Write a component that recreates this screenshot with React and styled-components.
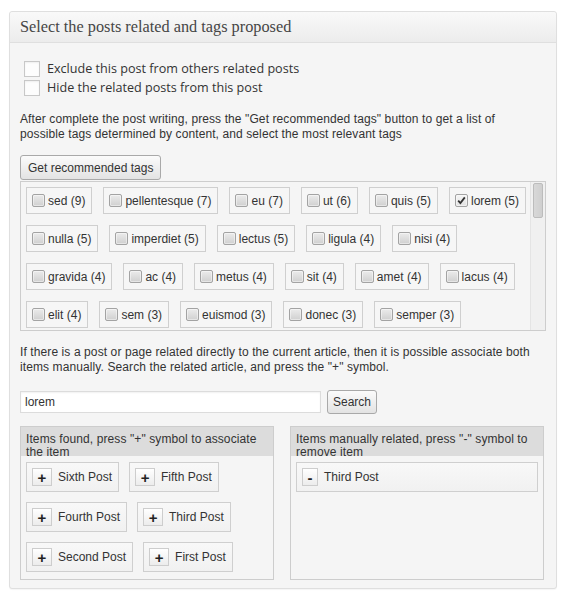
import React from 'react';
import styled, { createGlobalStyle } from 'styled-components';

const GlobalStyle = createGlobalStyle`
  html, body { margin: 0; padding: 0; background: #fff; }
  body { font-family: "Liberation Sans", Arial, sans-serif; font-size: 12px; color: #333; }
  * { box-sizing: border-box; }
`;

const Page = styled.div`
  padding: 11px 10px 8px 9px;
`;

const Postbox = styled.div`
  width: 548px;
  border: 1px solid #dfdfdf;
  border-radius: 3px;
  background: #f5f5f5;
  box-shadow: 0 1px 1px rgba(0, 0, 0, 0.04);
`;

const Header = styled.h3`
  margin: 0;
  height: 31px;
  padding: 0 10px;
  border-bottom: 1px solid #dfdfdf;
  border-radius: 3px 3px 0 0;
  background: linear-gradient(#f9f9f9, #ececec);
  font-family: "Liberation Serif", Georgia, serif;
  font-size: 16.3px;
  font-weight: normal;
  line-height: 30px;
  color: #464646;
`;

const Body = styled.div`
  padding: 0 10px 8px;
`;

const OptionList = styled.ul`
  list-style: none;
  margin: 16px 0 0;
  padding: 0;
`;

const OptionRow = styled.li`
  display: flex;
  align-items: center;
  height: 19px;
  font-family: "Open Sans", "Liberation Sans", sans-serif;
  font-size: 12.6px;
  color: #333;
`;

const OptionBox = styled.span`
  width: 16px;
  height: 16px;
  margin: 0 7px 0 4px;
  border: 1px solid #c8c8c8;
  background: #fdfdfd;
  box-shadow: inset 0 1px 2px rgba(0, 0, 0, 0.06);
`;

const Hint = styled.p`
  max-width: 518px;
  margin: ${(p) => p.$top}px 0 0;
  line-height: 15px;
  font-size: 12px;
  letter-spacing: 0.1px;
  color: #333;
`;

const GrayButton = styled.button`
  display: flex;
  align-items: center;
  height: ${(p) => p.$h}px;
  margin-top: ${(p) => p.$top || 0}px;
  padding: 0 ${(p) => p.$px}px;
  border: 1px solid #a9a9a9;
  border-radius: 3px;
  background: linear-gradient(#fbfbfb, #e3e3e3);
  font-family: "Liberation Sans", Arial, sans-serif;
  font-size: 12px;
  color: #333;
  cursor: pointer;
`;

const TagBox = styled.div`
  display: flex;
  margin-top: 1px;
  height: 150px;
  border: 1px solid #cdcdcd;
`;

const TagViewport = styled.div`
  flex: 1;
  overflow: hidden;
  padding: 5px 0 5px 5px;
`;

const ScrollTrack = styled.div`
  width: 15px;
  padding: 1px 2px 0 2px;
  background: #f0f0f0;
  border-left: 1px solid #e4e4e4;
`;

const ScrollThumb = styled.div`
  height: 35px;
  border: 1px solid #bcbcbc;
  border-radius: 2px;
  background: linear-gradient(90deg, #d8d8d8, #cfcfcf);
`;

const TagList = styled.div`
  display: flex;
  flex-wrap: wrap;
  gap: 11px;
`;

const Tag = styled.label`
  display: flex;
  align-items: center;
  height: 27px;
  padding: 0 6px 0 5px;
  border: 1px solid #cfcfcf;
  background: #f6f6f6;
  font-size: 12px;
  color: #333;
  white-space: nowrap;
`;

const TagCheck = styled.span`
  position: relative;
  width: 13px;
  height: 13px;
  margin-right: 3px;
  border: 1px solid #a3a3a3;
  border-radius: 2px;
  background: ${(p) =>
    p.$checked ? 'linear-gradient(#f6f6f6, #e2e2e2)' : 'linear-gradient(#ebebeb, #d0d0d0)'};
  box-shadow: inset 0 0 0 1px rgba(255, 255, 255, 0.45);

  svg {
    position: absolute;
    left: 1px;
    top: 1px;
  }
`;

const SearchRow = styled.div`
  display: flex;
  align-items: center;
  gap: 6px;
  height: 24px;
  margin-top: 15px;
`;

const SearchInput = styled.input`
  width: 301px;
  height: 22px;
  padding: 0 4px;
  border: 1px solid #dcdcdc;
  background: #fff;
  box-shadow: inset 0 1px 2px rgba(0, 0, 0, 0.06);
  font-family: "Liberation Sans", Arial, sans-serif;
  font-size: 12px;
  color: #333;
  outline: none;
`;

const Panels = styled.div`
  display: flex;
  gap: 16px;
  margin-top: 12px;
`;

const Panel = styled.div`
  width: 254px;
  height: 154px;
  border: 1px solid #cdcdcd;
  background: #f5f5f5;
`;

const PanelHead = styled.div`
  height: 29px;
  padding: 6px 10px 0 5px;
  background: #dcdcdc;
  line-height: 13px;
  font-size: 12px;
  letter-spacing: 0.1px;
  color: #333;
`;

const ItemList = styled.div`
  display: flex;
  flex-wrap: wrap;
  align-content: flex-start;
  gap: 10px;
  padding: 6px 5px;
`;

const Item = styled.div`
  display: flex;
  align-items: center;
  width: ${(p) => (p.$full ? '100%' : 'auto')};
  height: 30px;
  padding: 0 6px 0 5px;
  border: 1px solid #cfcfcf;
  background: linear-gradient(#f8f8f8, #f1f1f1);
  font-size: 12px;
  color: #333;
`;

const ItemButton = styled.span`
  display: flex;
  align-items: center;
  justify-content: center;
  width: ${(p) => p.$w}px;
  height: 18px;
  margin-right: 6px;
  border: 1px solid #cdcdcd;
  background: linear-gradient(#ffffff, #ececec);
  font-family: "Liberation Sans", Arial, sans-serif;
  font-size: 15px;
  font-weight: bold;
  line-height: 1;
  color: #222;
`;

const tags = [
  ['sed', 9], ['pellentesque', 7], ['eu', 7], ['ut', 6], ['quis', 5], ['lorem', 5, true],
  ['nulla', 5], ['imperdiet', 5], ['lectus', 5], ['ligula', 4], ['nisi', 4],
  ['gravida', 4], ['ac', 4], ['metus', 4], ['sit', 4], ['amet', 4], ['lacus', 4],
  ['elit', 4], ['sem', 3], ['euismod', 3], ['donec', 3], ['semper', 3],
];

const found = ['Sixth Post', 'Fifth Post', 'Fourth Post', 'Third Post', 'Second Post', 'First Post'];

const Check = () => (
  <svg width="9" height="9" viewBox="0 0 9 9">
    <path d="M1.2 4.6 L3.4 7 L7.8 1.4" fill="none" stroke="#333" strokeWidth="1.8" />
  </svg>
);

export default function App() {
  return (
    <>
      <GlobalStyle />
      <Page>
        <Postbox>
          <Header>Select the posts related and tags proposed</Header>
          <Body>
            <OptionList>
              <OptionRow><OptionBox />Exclude this post from others related posts</OptionRow>
              <OptionRow><OptionBox />Hide the related posts from this post</OptionRow>
            </OptionList>
            <Hint $top={15}>
              After complete the post writing, press the "Get recommended tags" button to get a list of
              possible tags determined by content, and select the most relevant tags
            </Hint>
            <GrayButton $h={25} $px={7} $top={13}>Get recommended tags</GrayButton>
            <TagBox>
              <TagViewport>
                <TagList>
                  {tags.map(([name, count, checked]) => (
                    <Tag key={name}>
                      <TagCheck $checked={checked}>{checked && <Check />}</TagCheck>
                      {name} ({count})
                    </Tag>
                  ))}
                </TagList>
              </TagViewport>
              <ScrollTrack>
                <ScrollThumb />
              </ScrollTrack>
            </TagBox>
            <Hint $top={14}>
              If there is a post or page related directly to the current article, then it is possible associate both
              items manually. Search the related article, and press the "+" symbol.
            </Hint>
            <SearchRow>
              <SearchInput defaultValue="lorem" />
              <GrayButton $h={24} $px={5}>Search</GrayButton>
            </SearchRow>
            <Panels>
              <Panel>
                <PanelHead>Items found, press "+" symbol to associate the item</PanelHead>
                <ItemList>
                  {found.map((t) => (
                    <Item key={t}>
                      <ItemButton $w={20}>+</ItemButton>
                      {t}
                    </Item>
                  ))}
                </ItemList>
              </Panel>
              <Panel>
                <PanelHead>Items manually related, press "-" symbol to remove item</PanelHead>
                <ItemList>
                  <Item $full>
                    <ItemButton $w={16}>-</ItemButton>
                    Third Post
                  </Item>
                </ItemList>
              </Panel>
            </Panels>
          </Body>
        </Postbox>
      </Page>
    </>
  );
}
